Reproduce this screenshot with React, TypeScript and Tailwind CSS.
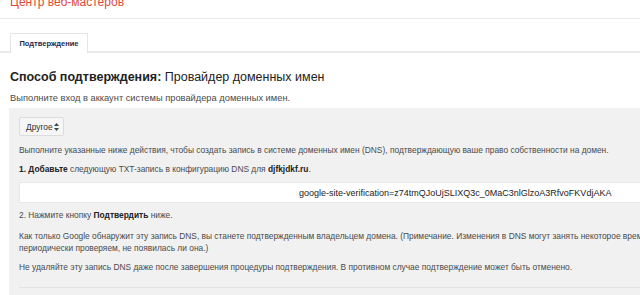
const VERIFICATION_CODE = 'google-site-verification=z74tmQJoUjSLIXQ3c_0MaC3nlGlzoA3RfvoFKVdjAKA';

export default function App() {
  return (
    <div className="w-[640px] h-[295px] overflow-hidden bg-white text-[#4a4a4a] font-['Liberation_Sans',Arial,sans-serif]">
      {/* header */}
      <div className="h-[19px] border-b border-[#ebebeb] pl-[10px] overflow-hidden">
        <div className="text-[12px] leading-[12px] -mt-[4px] text-[#dd4b39]">Центр веб-мастеров</div>
      </div>

      {/* tabs */}
      <div className="flex mt-[14px]">
        <div className="w-[10px] border-b-2 border-[#ebebeb]" />
        <div className="w-[78px] h-[20px] border border-b-0 border-[#e5e5e5] bg-white flex items-center justify-center text-[7.5px] font-bold text-[#262a4c]">
          Подтверждение
        </div>
        <div className="flex-1 border-b-2 border-[#ebebeb]" />
      </div>

      <div className="pl-[10px] pt-[16px]">
        <h2 className="text-[12.5px] text-[#222] leading-[16px]">
          <span className="font-bold">Способ подтверждения:</span> Провайдер доменных имен
        </h2>
        <p className="text-[9.3px] leading-[12px] mt-[7px]">Выполните вход в аккаунт системы провайдера доменных имен.</p>
      </div>

      {/* panel */}
      <div className="ml-[9px] mt-[4px] w-[900px] bg-[#f1f1f1] pl-[10px] pt-[9px] text-[8.4px] leading-[12px]">
        <div className="w-[45px] h-[19px] border border-[#dcdcdc] bg-[#f6f6f6] rounded-[2px] flex items-center justify-between pl-[6px] pr-[4px] text-[#333]">
          <span>Другое</span>
          <svg width="5" height="8" viewBox="0 0 5 8" className="text-[#444]">
            <path d="M2.5 0L5 3H0z" fill="currentColor" />
            <path d="M2.5 8L5 5H0z" fill="currentColor" />
          </svg>
        </div>

        <p className="mt-[8px]">
          Выполните указанные ниже действия, чтобы создать запись в системе доменных имен (DNS), подтверждающую ваше право собственности на домен.
        </p>
        <p className="mt-[7px]">
          <span className="font-bold text-[#222]">1. Добавьте</span> следующую TXT-запись в конфигурацию DNS для <span className="font-bold text-[#222]">djfkjdkf.ru</span>.
        </p>

        <div className="mt-[7px] h-[21px] bg-white border border-[#e8e8e8] flex items-center pl-[279px] text-[9px] text-[#222]">
          {VERIFICATION_CODE}
        </div>

        <p className="mt-[6px]">
          2. Нажмите кнопку <span className="font-bold text-[#222]">Подтвердить</span> ниже.
        </p>
        <p className="mt-[9px] whitespace-nowrap">
          Как только Google обнаружит эту запись DNS, вы станете подтвержденным владельцем домена. (Примечание. Изменения в DNS могут занять некоторое время. Мы
          <br />
          периодически проверяем, не появилась ли она.)
        </p>
        <p className="mt-[7px]">
          Не удаляйте эту запись DNS даже после завершения процедуры подтверждения. В противном случае подтверждение может быть отменено.
        </p>

        <div className="mt-[14px] border-t border-[#e3e3e3] h-[20px]" />
      </div>
    </div>
  );
}
